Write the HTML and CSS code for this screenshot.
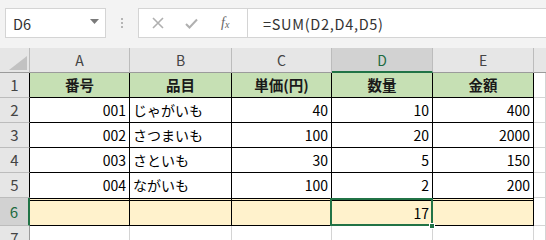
FILE: index.html
```html
<!DOCTYPE html>
<html lang="ja">
<head>
    <meta charset="UTF-8">
    <title>Sheet</title>
    <link rel="stylesheet" href="styles.css">
</head>
<body>
    <!-- 数式バー -->
    <div class="toolbar">
        <div class="name-box">
            <span>D6</span>
            <svg class="arrow" width="9" height="5" viewBox="0 0 9 5"><path d="M0 0H9L4.5 5Z" fill="#7a7a7a"/></svg>
        </div>
        <div class="grip"><i></i><i></i><i></i></div>
        <div class="formula">
            <div class="buttons">
                <svg width="12" height="12" viewBox="0 0 12 12"><path d="M1 1L11 11M11 1L1 11" stroke="#b0b0b0" stroke-width="1.6" fill="none"/></svg>
                <svg width="13" height="11" viewBox="0 0 13 11"><path d="M1 6L4.5 9.5L12 1.5" stroke="#b0b0b0" stroke-width="2" fill="none"/></svg>
                <span class="fx">f<sub>x</sub></span>
            </div>
            <div class="text">=SUM(D2,D4,D5)</div>
        </div>
    </div>

    <!-- シート -->
    <div class="sheet">
        <div class="corner"><svg width="18" height="14" viewBox="0 0 18 14"><path d="M18 0V14H0Z" fill="#c2c2c2"/></svg></div>
        <div class="ch">A</div>
        <div class="ch">B</div>
        <div class="ch">C</div>
        <div class="ch sel-col">D</div>
        <div class="ch">E</div>
        <div class="ch rest"></div>

        <div class="rh dark">1</div>
        <div class="c hdr">番号</div>
        <div class="c hdr">品目</div>
        <div class="c hdr">単価(円)</div>
        <div class="c hdr">数量</div>
        <div class="c hdr">金額</div>
        <div class="g"></div>

        <div class="rh dark">2</div>
        <div class="c num">001</div>
        <div class="c">じゃがいも</div>
        <div class="c num">40</div>
        <div class="c num">10</div>
        <div class="c num">400</div>
        <div class="g"></div>

        <div class="rh dark">3</div>
        <div class="c num">002</div>
        <div class="c">さつまいも</div>
        <div class="c num">100</div>
        <div class="c num">20</div>
        <div class="c num">2000</div>
        <div class="g"></div>

        <div class="rh dark">4</div>
        <div class="c num">003</div>
        <div class="c">さといも</div>
        <div class="c num">30</div>
        <div class="c num">5</div>
        <div class="c num">150</div>
        <div class="g"></div>

        <div class="rh dark">5</div>
        <div class="c num last">004</div>
        <div class="c last">ながいも</div>
        <div class="c num last">100</div>
        <div class="c num last">2</div>
        <div class="c num last">200</div>
        <div class="g"></div>

        <div class="rh dark sel-row">6</div>
        <div class="c tot"></div>
        <div class="c tot"></div>
        <div class="c tot"></div>
        <div class="c tot num active">17<span class="handle"></span></div>
        <div class="c tot"></div>
        <div class="g"></div>

        <div class="rh">7</div>
        <div class="g"></div>
        <div class="g"></div>
        <div class="g"></div>
        <div class="g"></div>
        <div class="g"></div>
        <div class="g"></div>
    </div>
</body>
</html>
```

FILE: styles.css
```css
* {
    box-sizing: border-box;
}

body {
    margin: 0;
    width: 546px;
    height: 240px;
    overflow: hidden;
    background: #ffffff;
    font-family: "Noto Sans CJK JP", "Noto Sans", sans-serif;
    font-size: 14px;
    color: #000000;
}

/* formula bar */
.toolbar {
    height: 48px;
    background: #f3f3f3;
    display: flex;
    align-items: flex-start;
    padding: 8px 0 0 5px;
}

.name-box {
    width: 101px;
    height: 30px;
    background: #ffffff;
    border: 1px solid #d4d4d4;
    display: flex;
    align-items: center;
    justify-content: space-between;
    padding: 0 6px 0 7px;
    color: #333333;
    font-size: 14.5px;
}

.name-box .arrow {
    margin-top: -3px;
}

.grip {
    width: 32px;
    height: 30px;
    display: flex;
    flex-direction: column;
    align-items: center;
    justify-content: center;
    gap: 2px;
}

.grip i {
    width: 2px;
    height: 2px;
    background: #b5b5b5;
}

.formula {
    flex: 1;
    height: 30px;
    background: #ffffff;
    border: 1px solid #d4d4d4;
    border-right: none;
    display: flex;
}

.buttons {
    width: 109px;
    border-right: 1px solid #d4d4d4;
    display: flex;
    align-items: center;
    padding-left: 13px;
    gap: 21px;
}

.fx {
    font-family: "Liberation Serif", serif;
    font-style: italic;
    font-size: 14px;
    color: #666666;
    margin-left: 2px;
    line-height: 1;
}

.fx sub {
    font-size: 10px;
    vertical-align: -1px;
}

.text {
    padding-left: 15px;
    display: flex;
    align-items: center;
    color: #333333;
    font-size: 14.5px;
    letter-spacing: 0.7px;
}

/* sheet grid */
.sheet {
    display: grid;
    grid-template-columns: 30px 100px 102px 100px 101px 101px 1fr;
    grid-template-rows: 25px 25px 25px 25px 25px 25px 28px 20px;
}

.corner {
    background: #e6e6e6;
    border-right: 1px solid #bcbcbc;
    border-bottom: 1px solid #9b9b9b;
    display: flex;
    align-items: flex-end;
    justify-content: flex-end;
    padding: 0 2px 2px 0;
}

.ch {
    background: #e6e6e6;
    border-right: 1px solid #bcbcbc;
    border-bottom: 1px solid #9b9b9b;
    text-align: center;
    line-height: 24px;
    color: #444444;
    font-size: 14px;
}

.ch.rest {
    border-right: none;
}

.ch.sel-col {
    background: #d2d2d2;
    color: #1e6b41;
    border-bottom: 2px solid #217346;
}

.rh {
    background: #e6e6e6;
    border-right: 1px solid #9b9b9b;
    border-bottom: 1px solid #bcbcbc;
    text-align: center;
    line-height: 24px;
    color: #444444;
    font-size: 15px;
}

.rh.dark {
    border-right-color: #000000;
}

.rh.sel-row {
    background: #d2d2d2;
    color: #1e6b41;
    border-right: 2px solid #217346;
    line-height: 27px;
}

.c {
    border-right: 1px solid #000000;
    border-bottom: 1px solid #000000;
    padding: 0 3px;
    line-height: 24px;
    white-space: nowrap;
    overflow: hidden;
}

.c.num {
    text-align: right;
}

.c.hdr {
    background: #c6e0b4;
    font-weight: bold;
    text-align: center;
    color: #1a1a1a;
    font-size: 14.5px;
}

.c.last {
    border-bottom: none;
}

.c.tot {
    background: #fff2cc;
    border-top: 3px double #000000;
}

.c.active {
    position: relative;
    overflow: visible;
}

.c.active::after {
    content: "";
    position: absolute;
    left: -2px;
    top: -3px;
    right: -1px;
    bottom: -1px;
    border: 2px solid #217346;
}

.handle {
    position: absolute;
    right: -3px;
    bottom: -4px;
    width: 6px;
    height: 6px;
    background: #217346;
    border: 1px solid #ffffff;
    z-index: 1;
}

.g {
    border-right: 1px solid #d4d4d4;
    border-bottom: 1px solid #d4d4d4;
}
```
